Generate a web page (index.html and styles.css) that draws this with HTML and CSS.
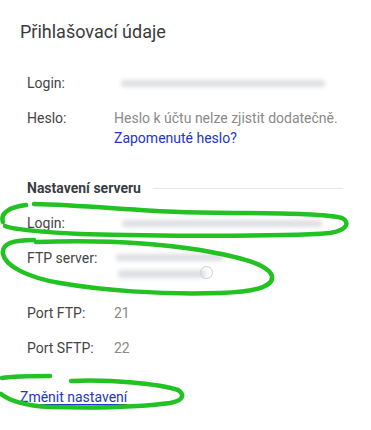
FILE: index.html
```html
<!DOCTYPE html>
<html lang="cs">
<head>
<meta charset="utf-8">
<link rel="stylesheet" href="styles.css">
</head>
<body>
<div class="card">
  <h1 class="title">Přihlašovací údaje</h1>
  <div class="rows">
    <div class="row"><div class="label">Login:</div><div class="value"><span class="blur blur-login"></span></div></div>
    <div class="row"><div class="label">Heslo:</div><div class="value">Heslo k účtu nelze zjistit dodatečně.<br><a class="link" href="#">Zapomenuté heslo?</a></div></div>
  </div>
  <div class="section-head"><span class="section-title">Nastavení serveru</span><span class="section-line"></span></div>
  <div class="rows">
    <div class="row"><div class="label">Login:</div><div class="value"><span class="blur blur-login2"></span></div></div>
    <div class="row row-tall"><div class="label">FTP server:</div><div class="value"><span class="blur blur-ftp1"></span><span class="blur blur-ftp2"></span><span class="copy-icon"></span></div></div>
    <div class="row"><div class="label">Port FTP:</div><div class="value">21</div></div>
    <div class="row"><div class="label">Port SFTP:</div><div class="value">22</div></div>
  </div>
  <a class="link change" href="#">Změnit nastavení</a>
</div>
<svg class="scribbles" width="371" height="430" viewBox="0 0 371 430" fill="none" stroke="#22c222" stroke-width="4.5" stroke-linecap="round" stroke-linejoin="round">
  <path d="M3 222 C0 214 8 207 26 205"/>
  <path d="M34 204 C80 205 130 210 180 212 C250 214 320 212 342 218 C350 222 348 230 330 233 C280 237 150 236 80 234 C40 232 15 230 5 226"/>
  <path d="M10 243 C18 240 28 240 34 240"/>
  <path d="M36 242 C90 240 150 242 200 250 C240 257 268 264 272 276 C274 288 250 292 220 293 C160 295 100 290 60 283 C25 277 5 265 3 254 C2 248 5 245 10 243"/>
  <path d="M2 378 C15 376 35 376 50 376"/>
  <path d="M71 381 C110 379 160 384 178 390 C186 395 182 401 170 403 C140 407 90 408 50 407 C25 406 8 400 1 394"/>
</svg>
</body>
</html>
```
FILE: styles.css
```css
html, body {
  margin: 0;
  padding: 0;
  background: #ffffff;
}
body {
  font-family: Roboto, "Noto Sans", sans-serif;
  width: 371px;
  height: 430px;
  overflow: hidden;
  position: relative;
}
.card {
  padding: 20px 20px 0 20px;
}
.title {
  margin: 0 0 29px 0;
  font-size: 18px;
  line-height: 24px;
  font-weight: 400;
  color: #3a3a3a;
}
.rows {
  display: flex;
  flex-direction: column;
  gap: 15px;
  padding-left: 7px;
}
.row {
  display: flex;
  font-size: 14px;
  line-height: 20px;
}
.label {
  width: 87px;
  flex: none;
  color: #444;
}
.value {
  color: #8a8a8a;
  position: relative;
  flex: 1;
  min-height: 20px;
}
.link {
  color: #2236c8;
  text-decoration: none;
}
.row-tall .value {
  height: 40px;
}
.section-head {
  display: flex;
  align-items: center;
  gap: 12px;
  margin: 30px 0 15px 7px;
  font-size: 14px;
  line-height: 20px;
}
.section-title {
  font-weight: 700;
  color: #3a3d42;
}
.section-line {
  flex: 1;
  height: 1px;
  background: #e6e6e6;
  margin-right: 8px;
}
.change {
  display: inline-block;
  margin-top: 29px;
  font-size: 14px;
  line-height: 20px;
  text-decoration: underline;
  text-underline-offset: 2px;
}
.blur {
  position: absolute;
  display: block;
  background: #dedfe2;
  border-radius: 3px;
  filter: blur(2px);
}
.blur-login { left: 7px; top: 7px; width: 204px; height: 7px; }
.blur-login2 { left: 8px; top: 7px; width: 200px; height: 7px; }
.blur-ftp1 { left: 2px; top: 6px; width: 108px; height: 7px; }
.blur-ftp2 { left: 4px; top: 22px; width: 88px; height: 8px; }
.copy-icon {
  position: absolute;
  left: 86px;
  top: 18px;
  width: 11px;
  height: 11px;
  border: 1px solid #cdced1;
  border-radius: 50%;
}
.scribbles {
  position: absolute;
  left: 0;
  top: 0;
  pointer-events: none;
}
```
